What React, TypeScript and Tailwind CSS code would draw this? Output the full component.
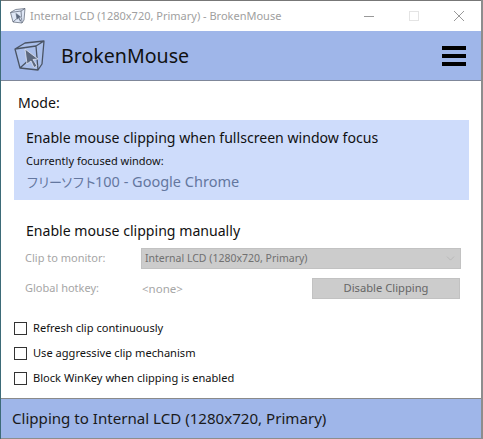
import { ChevronDown } from "lucide-react";

const OPTIONS = ["Refresh clip continuously", "Use aggressive clip mechanism", "Block WinKey when clipping is enabled"];

function CubeIcon({ size }: { size: number }) {
  return (
    <svg width={size} height={size} viewBox="0 0 32 32" fill="none">
      <path d="M1 9 L11 3 L30 1 L28 24 L24 30 L6 28 Z" fill="#b9c9ec" fillOpacity="0.45" />
      <path d="M1 9 L22 6 L30 1 L11 3 L1 9 L6 28 L24 30 L22 6 M24 30 L28 24 L30 1 M6 28 L17 18" stroke="#4a5464" strokeWidth="1.3" strokeLinejoin="round" />
      <path d="M11 9 L24 19 L19 19.5 L23 26 L20 27.5 L17 21 L13 24 Z" fill="#5d697e" stroke="#dfe5f1" strokeWidth="0.8" />
    </svg>
  );
}

export default function App() {
  return (
    <div className="w-[483px] h-[439px] bg-[#8d8d8d] pr-[2px] pb-px font-['Noto_Sans',sans-serif] overflow-hidden border-l border-l-[#3d6b78]">
      <div className="h-full flex flex-col bg-white">
        {/* Title bar */}
        <div className="h-[31px] flex items-center pl-[9px] border-t border-t-[#777] flex-shrink-0">
          <CubeIcon size={16} />
          <span className="ml-[4px] text-[11px] text-[#a0a0a0] whitespace-nowrap">Internal LCD (1280x720, Primary) - BrokenMouse</span>
          <div className="ml-auto mr-[17px] flex items-center gap-[35px]">
            <div className="w-[10px] h-px bg-[#999]" />
            <div className="w-[10px] h-[10px] border border-[#e4e4e4]" />
            <svg width="10" height="10" viewBox="0 0 10 10" stroke="#999" strokeWidth="1">
              <path d="M0 0 L10 10 M10 0 L0 10" />
            </svg>
          </div>
        </div>

        {/* Header */}
        <div className="h-[50px] flex items-center pl-[13px] pr-[15px] bg-[#9fb6e9] border-b border-b-[#7f8799] flex-shrink-0">
          <CubeIcon size={32} />
          <span className="ml-[15px] text-[19.6px] text-[#111]">BrokenMouse</span>
          <div className="ml-auto flex flex-col gap-[4px]">
            <div className="w-6 h-1 bg-black" />
            <div className="w-6 h-1 bg-black" />
            <div className="w-6 h-1 bg-black" />
          </div>
        </div>

        {/* Body */}
        <div className="flex-1 flex flex-col pl-[13px] pr-[12px] pt-[12px]">
          <div className="text-[14.1px] leading-[20px] pl-[4px] text-[#111]">Mode:</div>

          <div className="mt-[7px] h-[80px] bg-[#cedcfb] pl-[12px] pt-[8px]">
            <div className="text-[14.1px] leading-[20px] text-[#111]">Enable mouse clipping when fullscreen window focus</div>
            <div className="text-[11px] leading-[16px] mt-[5px] text-[#111]">Currently focused window:</div>
            <div className="text-[14.5px] leading-[20px] mt-[2px] text-[#64779f] font-['Noto_Sans','Noto_Sans_CJK_JP',sans-serif]">
              <span className="text-[13px] tracking-[-1.5px]">フリーソフト</span>100 - Google Chrome
            </div>
          </div>

          <div className="mt-[21px] pl-[12px] text-[14.1px] leading-[20px] text-[#111]">Enable mouse clipping manually</div>

          <div className="mt-[7px] pl-[11px] flex items-center">
            <span className="w-[116px] text-[11px] text-[#a6a6a6]">Clip to monitor:</span>
            <div className="w-[320px] h-[21px] bg-[#cccccc] border border-[#c2c2c2] flex items-center justify-between pl-[3px] pr-[3px] text-[10.5px] text-[#707070]">
              <span>Internal LCD (1280x720, Primary)</span>
              <ChevronDown size={13} strokeWidth={1} className="text-[#a8a8a8]" />
            </div>
          </div>

          <div className="mt-[9px] pl-[11px] pr-[9px] flex items-center">
            <span className="w-[116px] text-[11px] text-[#a6a6a6]">Global hotkey:</span>
            <span className="text-[11.5px] pl-px text-[#a6a6a6]">&lt;none&gt;</span>
            <button className="ml-auto w-[148px] h-[21px] bg-[#cccccc] border border-[#c2c2c2] text-[11.2px] text-[#666]">Disable Clipping</button>
          </div>

          <div className="mt-[23px] flex flex-col gap-[12px]">
            {OPTIONS.map((label) => (
              <div key={label} className="flex items-center h-[13px]">
                <div className="w-[13px] h-[13px] border border-[#333] bg-white flex-shrink-0" />
                <span className="ml-[6px] text-[11.1px] text-[#111] whitespace-nowrap">{label}</span>
              </div>
            ))}
          </div>
        </div>

        {/* Status bar */}
        <div className="h-[40px] flex items-center pl-[11px] pb-px bg-[#9fb6e9] border-t border-t-[#8a8a8a] text-[15.1px] text-[#1a1a1a] flex-shrink-0">
          Clipping to Internal LCD (1280x720, Primary)
        </div>
      </div>
    </div>
  );
}
